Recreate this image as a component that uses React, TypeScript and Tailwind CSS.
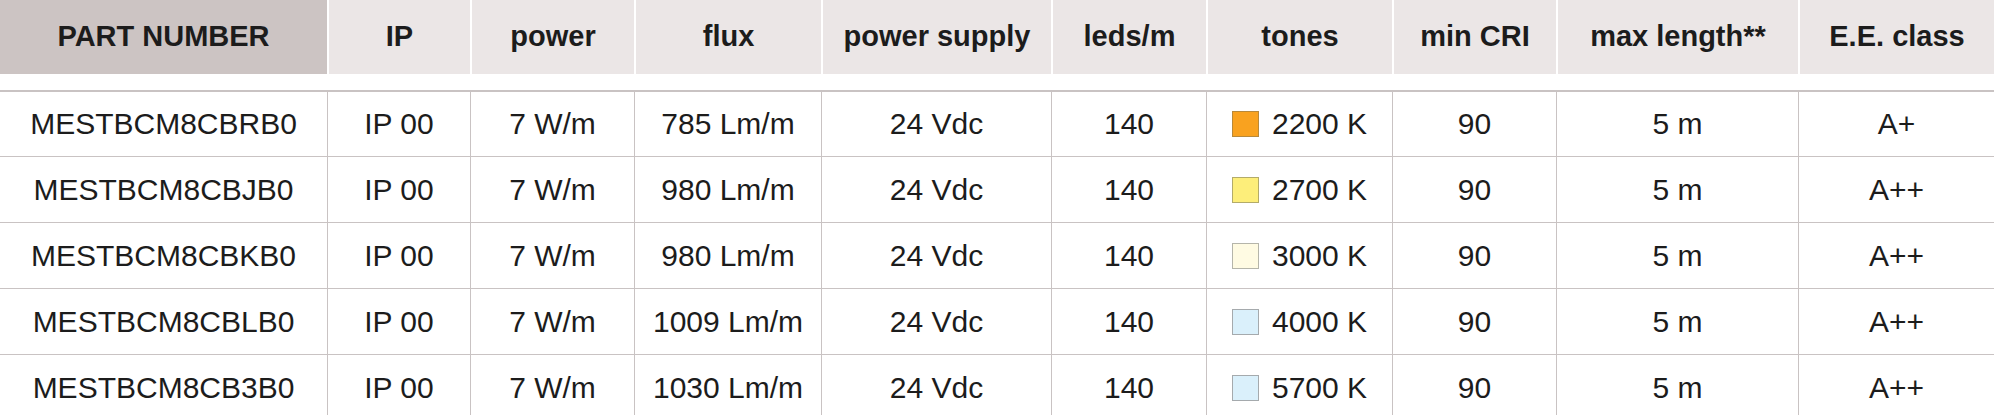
const headers = [
  "PART NUMBER",
  "IP",
  "power",
  "flux",
  "power supply",
  "leds/m",
  "tones",
  "min CRI",
  "max length**",
  "E.E. class",
];

type Row = {
  part: string;
  flux: string;
  tone: string;
  swatch: string;
  edge: string;
  ee: string;
};

const rows: Row[] = [
  { part: "MESTBCM8CBRB0", flux: "785 Lm/m", tone: "2200 K", swatch: "bg-[#f9a21f]", edge: "border-[#b8893a]", ee: "A+" },
  { part: "MESTBCM8CBJB0", flux: "980 Lm/m", tone: "2700 K", swatch: "bg-[#fdee7a]", edge: "border-[#b3ab6a]", ee: "A++" },
  { part: "MESTBCM8CBKB0", flux: "980 Lm/m", tone: "3000 K", swatch: "bg-[#fffbe3]", edge: "border-[#b5b5aa]", ee: "A++" },
  { part: "MESTBCM8CBLB0", flux: "1009 Lm/m", tone: "4000 K", swatch: "bg-[#daf0fb]", edge: "border-[#a5aaad]", ee: "A++" },
  { part: "MESTBCM8CB3B0", flux: "1030 Lm/m", tone: "5700 K", swatch: "bg-[#daf0fb]", edge: "border-[#a5aaad]", ee: "A++" },
];

const cols = "grid grid-cols-[327px_143px_164px_187px_230px_155px_186px_164px_242px_196px]";

function Cell({ children, first }: { children: React.ReactNode; first?: boolean }) {
  return (
    <div
      className={`flex items-center justify-center ${first ? "" : "border-l border-[#c9c3c3]"}`}
    >
      {children}
    </div>
  );
}

export default function App() {
  return (
    <div
      className="w-[1994px] h-[415px] overflow-hidden bg-white text-[#1c1c1c]"
      style={{ fontFamily: '"Liberation Sans", Arial, sans-serif' }}
    >
      {/* header */}
      <div className={`${cols} h-[74px]`}>
        {headers.map((h, i) => (
          <div
            key={h}
            className={`flex items-center justify-center text-[29px] font-bold ${
              i === 0 ? "bg-[#ccc4c3]" : "bg-[#ebe6e6] border-l-2 border-white"
            }`}
          >
            {h}
          </div>
        ))}
      </div>

      {/* body */}
      <div className="mt-[16px] border-t-2 border-[#c9c3c3]">
        {rows.map((r, i) => (
          <div
            key={r.part}
            className={`${cols} ${i === 0 ? "h-[65px]" : "h-[66px]"} border-b border-[#c9c3c3] text-[30px] leading-none`}
          >
            <Cell first>{r.part}</Cell>
            <Cell>IP 00</Cell>
            <Cell>7 W/m</Cell>
            <Cell>{r.flux}</Cell>
            <Cell>24 Vdc</Cell>
            <Cell>140</Cell>
            <Cell>
              <span className={`w-[27px] h-[26px] border ${r.swatch} ${r.edge} mr-[13px]`} />
              {r.tone}
            </Cell>
            <Cell>90</Cell>
            <Cell>5 m</Cell>
            <Cell>{r.ee}</Cell>
          </div>
        ))}
      </div>
    </div>
  );
}
